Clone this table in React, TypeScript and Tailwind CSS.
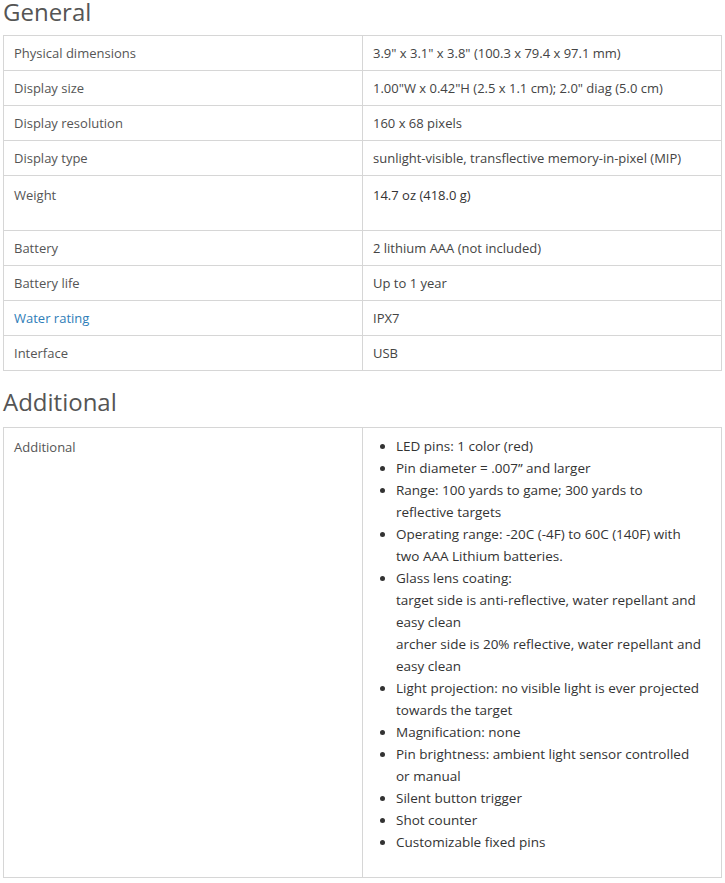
import React from "react";

type Spec = { label: string; value: string; link?: boolean; tall?: boolean };

const general: Spec[] = [
    { label: "Physical dimensions", value: "3.9\" x 3.1\" x 3.8\" (100.3 x 79.4 x 97.1 mm)" },
    { label: "Display size", value: "1.00\"W x 0.42\"H (2.5 x 1.1 cm); 2.0\" diag (5.0 cm)" },
    { label: "Display resolution", value: "160 x 68 pixels" },
    { label: "Display type", value: "sunlight-visible, transflective memory-in-pixel (MIP)" },
    { label: "Weight", value: "14.7 oz (418.0 g)", tall: true },
    { label: "Battery", value: "2 lithium AAA (not included)" },
    { label: "Battery life", value: "Up to 1 year" },
    { label: "Water rating", value: "IPX7", link: true },
    { label: "Interface", value: "USB" },
];

// each entry is one bullet, split into the lines it shows
const extras: string[][] = [
    ["LED pins: 1 color (red)"],
    ["Pin diameter = .007\u201d and larger"],
    ["Range: 100 yards to game; 300 yards to", "reflective targets"],
    ["Operating range: -20C (-4F) to 60C (140F) with", "two AAA Lithium batteries."],
    [
        "Glass lens coating:",
        "target side is anti-reflective, water repellant and",
        "easy clean",
        "archer side is 20% reflective, water repellant and",
        "easy clean",
    ],
    ["Light projection: no visible light is ever projected", "towards the target"],
    ["Magnification: none"],
    ["Pin brightness: ambient light sensor controlled", "or manual"],
    ["Silent button trigger"],
    ["Shot counter"],
    ["Customizable fixed pins"],
];

function Heading({ children, className = "" }: { children: React.ReactNode; className?: string }) {
    return (
        <h2 className={`text-[24px] leading-[24px] font-normal text-[#555] ${className}`}>
            {children}
        </h2>
    );
}

export default function App() {
    return (
        <div
            className="w-[725px] min-h-[883px] bg-white px-[3px] text-[13px]"
            style={{ fontFamily: '"Open Sans", sans-serif' }}
        >
            <Heading className="mb-[11px]">General</Heading>

            <table className="w-[719px] border-collapse table-fixed">
                <tbody>
                    {general.map((row) => (
                        <tr key={row.label} className={row.tall ? "h-[55px]" : "h-[35px]"}>
                            <td
                                className={`w-[359px] border border-[#d6d6d6] align-top pl-[10px] pr-[10px] leading-[18px] ${
                                    row.tall ? "pt-[10px]" : "pt-[8px]"
                                } ${row.link ? "text-[#2f7db8]" : "text-[#555]"}`}
                            >
                                {row.label}
                            </td>
                            <td
                                className={`border border-[#d6d6d6] align-top pl-[10px] pr-[10px] leading-[18px] ${
                                    row.tall ? "pt-[10px] text-[#333]" : "pt-[8px] text-[#444]"
                                }`}
                            >
                                {row.value}
                            </td>
                        </tr>
                    ))}
                </tbody>
            </table>

            <Heading className="mt-[19px] mb-[13px]">Additional</Heading>

            <table className="w-[719px] border-collapse table-fixed">
                <tbody>
                    <tr>
                        <td className="w-[359px] border border-[#d6d6d6] align-top pl-[10px] pr-[10px] pt-[10px] leading-[18px] text-[#555]">
                            Additional
                        </td>
                        <td className="border border-[#d6d6d6] align-top pl-[10px] pr-[6px] pt-[7px] pb-[24px]">
                            <ul className="list-disc pl-[23px] text-[13.5px] leading-[22px] text-[#333] whitespace-nowrap">
                                {extras.map((lines) => (
                                    <li key={lines[0]}>
                                        {lines.map((l, i) => (
                                            <React.Fragment key={i}>
                                                {i > 0 && <br />}
                                                {l}
                                            </React.Fragment>
                                        ))}
                                    </li>
                                ))}
                            </ul>
                        </td>
                    </tr>
                </tbody>
            </table>
        </div>
    );
}
